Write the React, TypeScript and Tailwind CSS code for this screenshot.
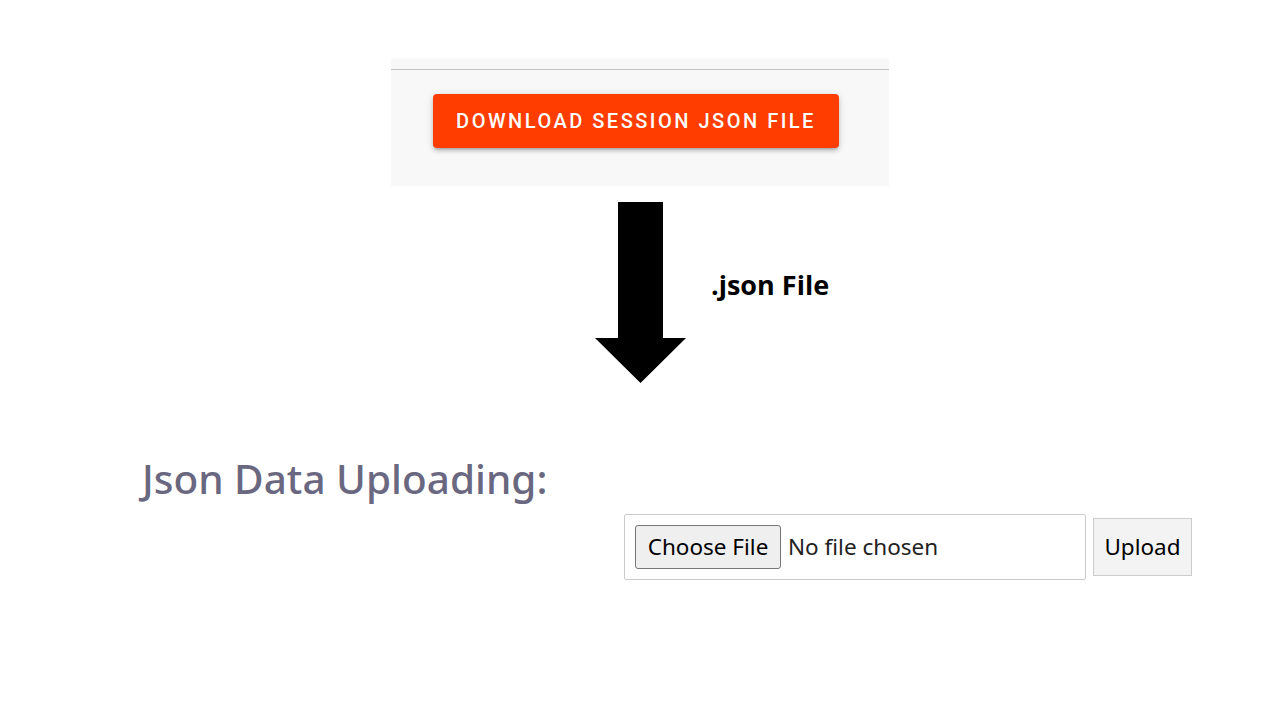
export default function App() {
  return (
    <main className="w-[1280px] h-[720px] bg-white flex flex-col items-center overflow-hidden">
      {/* download panel */}
      <div className="mt-[58px] w-[498px] h-[128px] bg-[#f8f8f8] flex flex-col">
        <div className="mt-[11px] w-full h-px bg-[#c4c4c4]" />
        <button
          className="mt-[24px] ml-[42px] w-[406px] h-[54px] rounded-[4px] bg-[#ff3d00] text-white text-[20px] font-medium tracking-[0.125em] shadow-[0_3px_3px_-2px_rgba(0,0,0,0.2),0_3px_4px_0_rgba(0,0,0,0.14),0_1px_8px_0_rgba(0,0,0,0.12)]"
          style={{ fontFamily: "Roboto, sans-serif" }}
        >
          DOWNLOAD SESSION JSON FILE
        </button>
      </div>

      {/* arrow + label */}
      <div className="mt-[16px] w-[498px] flex items-start">
        <svg width="92" height="182" viewBox="0 0 92 182" className="ml-[204px]">
          <polygon points="23,0 68,0 68,136 91,136 45.5,181 0,136 23,136" fill="#000" />
        </svg>
        <span
          className="ml-[24px] mt-[69px] text-[27px] font-bold text-black leading-none"
          style={{ fontFamily: "'Open Sans', sans-serif" }}
        >
          .json File
        </span>
      </div>

      {/* upload section */}
      <div className="w-full mt-[72px]" style={{ fontFamily: "'Noto Sans', sans-serif" }}>
        <h2 className="pl-[142px] text-[40.5px] leading-[46px] text-[#6a6780] font-medium">Json Data Uploading:</h2>
        <div className="mt-[12px] flex items-center gap-[7px] pl-[624px]">
          <div className="shrink-0 w-[462px] h-[66px] border border-[#cccccc] rounded-[2px] flex items-center px-[10px] gap-[7px]">
            <span className="h-[44px] w-[146px] flex items-center justify-center bg-[#efefef] border border-[#767676] rounded-[3px] text-[22.5px] text-black">
              Choose File
            </span>
            <span className="text-[22.5px] text-[#222]">No file chosen</span>
          </div>
          <button className="shrink-0 h-[58px] w-[99px] bg-[#f3f3f3] border border-[#cccccc] text-[22.5px] text-black">
            Upload
          </button>
        </div>
      </div>
    </main>
  );
}
